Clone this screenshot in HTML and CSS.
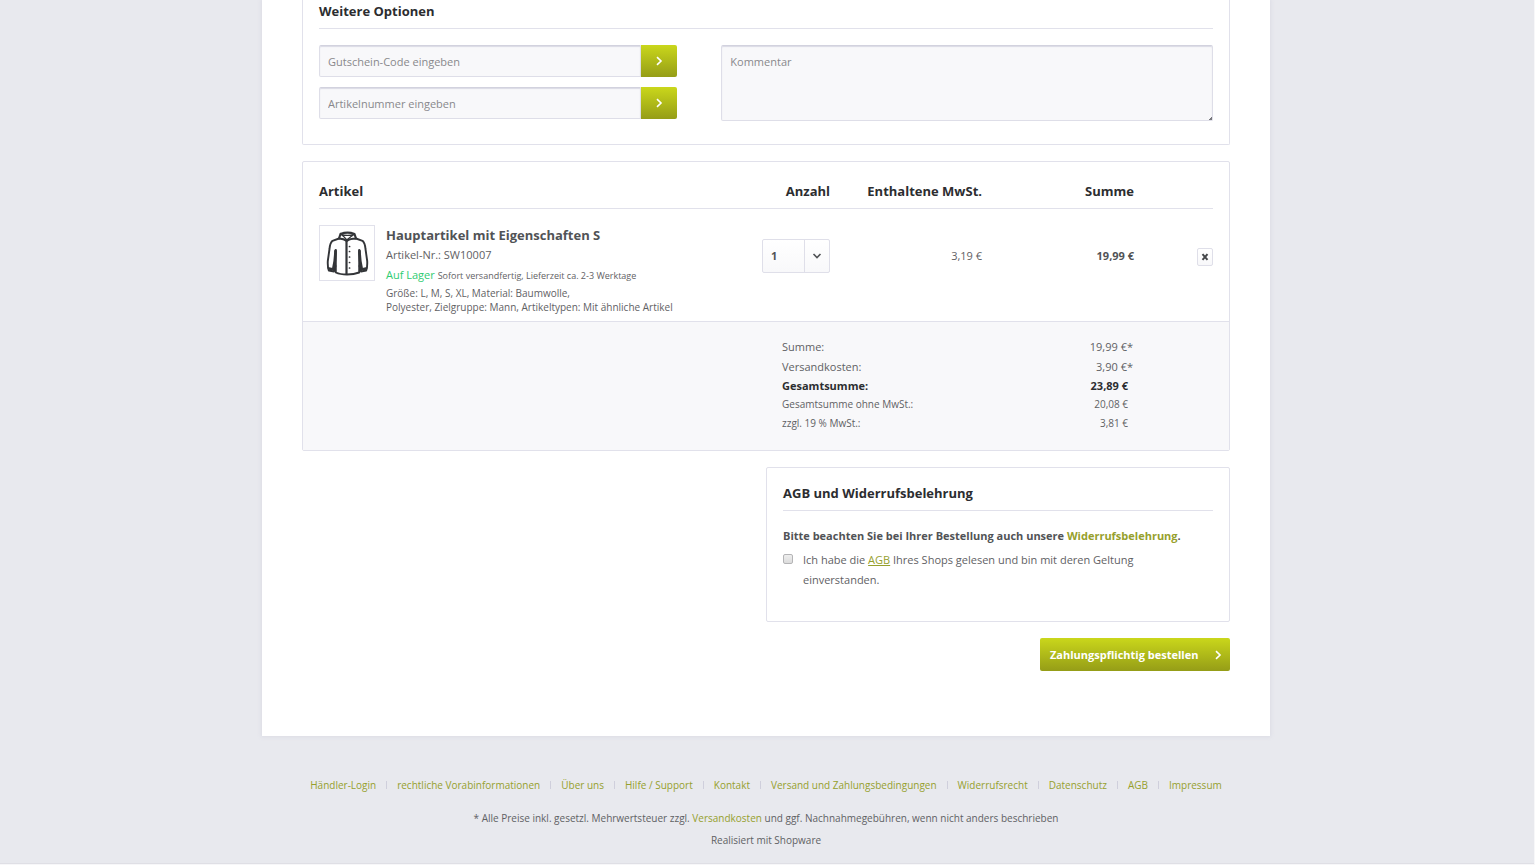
FILE: index.html
```html
<!DOCTYPE html>
<html lang="de">
<head>
<meta charset="utf-8">
<meta name="viewport" content="width=device-width, initial-scale=1">
<title>Bestellung prüfen</title>
<link rel="stylesheet" href="styles.css">
</head>
<body>
<div class="site">
<main class="page">
  <section class="panel panel--options">
    <h2 class="panel-title panel-title--top">Weitere Optionen</h2>
    <div class="options">
      <div class="options-codes">
        <form class="code-form">
          <input class="field" type="text" placeholder="Gutschein-Code eingeben" aria-label="Gutschein-Code">
          <button class="btn code-btn" type="button" aria-label="Gutschein einlösen"><svg class="chevron" viewBox="0 0 10 10"><path d="M3 1.2 7 5 3 8.8"/></svg></button>
        </form>
        <form class="code-form">
          <input class="field" type="text" placeholder="Artikelnummer eingeben" aria-label="Artikelnummer">
          <button class="btn code-btn" type="button" aria-label="Artikel hinzufügen"><svg class="chevron" viewBox="0 0 10 10"><path d="M3 1.2 7 5 3 8.8"/></svg></button>
        </form>
      </div>
      <textarea class="field comment" placeholder="Kommentar" aria-label="Kommentar"></textarea>
    </div>
  </section>

  <section class="panel cart">
    <div class="cart-body">
      <table class="cart-table">
        <colgroup><col><col class="col-qty"><col class="col-price"><col class="col-price"><col class="col-action"></colgroup>
        <thead>
          <tr><th class="left" scope="col">Artikel</th><th scope="col">Anzahl</th><th scope="col">Enthaltene MwSt.</th><th scope="col">Summe</th><td></td></tr>
        </thead>
        <tbody>
          <tr>
            <td class="left">
              <div class="product">
                <a class="thumb" href="#" aria-label="Hauptartikel mit Eigenschaften S">
                  <svg viewBox="0 0 54 54">
                    <g fill="none" stroke="#333538" stroke-linejoin="round" stroke-linecap="round">
                      <path stroke-width="2.2" d="M20.500 8 Q27.500 5.200 34.500 8 L36 12.500 M20.500 8 L19 12.500 M36 12.500 Q30 12.500 26.800 15 Q24 12.800 19 12.500"/>
                      <path stroke-width="1.400" d="M21 8.500 Q24.500 10.500 26.800 14 Q30.500 10.500 34.200 8.500 Q27.500 10.300 21 8.500"/>
                      <path stroke-width="1.900" d="M19 12.500 L12.500 14.800 Q10 17 9.500 23 L7.800 35 Q7.500 41 8.800 44.500 L14 45.500 L15.500 40 M36 12.500 L42.500 14.800 Q45 17 45.500 23 L47.200 35 Q47.500 41 46.200 44.500 L41 45.500 L39.500 40"/>
                      <path stroke-width="1.900" d="M15.800 24 V46.500 Q20 48.500 27 48.500 Q34 48.500 39.200 46.500 V24"/>
                      <path stroke-width="2.200" d="M26.500 15 V48"/>
                      <path stroke-width="2.800" d="M15.500 25 Q15.500 33 13.500 42 M39.500 25 Q39.500 33 41.500 42"/>
                      <path stroke-width="2.400" d="M9 42.500 L13.500 43.500 M46 42.500 L41.500 43.500"/>
                      <path stroke-width="1.700" d="M29.500 20.500h.1M29.500 25.500h.1M29.500 31h.1M29.500 36.500h.1M29.500 42h.1"/>
                    </g>
                  </svg>
                </a>
                <div class="product-text">
                  <a class="product-name" href="#">Hauptartikel mit Eigenschaften S</a>
                  <p class="line">Artikel-Nr.: SW10007</p>
                  <p class="line"><span class="stock">Auf Lager</span> <span class="small">Sofort versandfertig, Lieferzeit ca. 2-3 Werktage</span></p>
                  <p class="attributes">Größe: L, M, S, XL, Material: Baumwolle,<br>Polyester, Zielgruppe: Mann, Artikeltypen: Mit ähnliche Artikel</p>
                </div>
              </div>
            </td>
            <td>
              <div class="quantity">
                <select class="quantity-select" aria-label="Anzahl"><option>1</option><option>2</option><option>3</option></select>
                <span class="quantity-arrow"><svg viewBox="0 0 10 10"><path d="M1.500 3 5 6.500 8.500 3"/></svg></span>
              </div>
            </td>
            <td>3,19 €</td>
            <td class="strong">19,99 €</td>
            <td><button class="remove" type="button" aria-label="Artikel entfernen"><svg viewBox="0 0 8 8"><path d="M1.500 1.200 6.500 6.800M6.500 1.200 1.500 6.800"/></svg></button></td>
          </tr>
        </tbody>
      </table>
    </div>
    <div class="totals">
      <table class="totals-table">
        <tr><th scope="row">Summe:</th><td class="starred">19,99 €*</td></tr>
        <tr><th scope="row">Versandkosten:</th><td class="starred">3,90 €*</td></tr>
        <tr class="grand"><th scope="row">Gesamtsumme:</th><td>23,89 €</td></tr>
        <tr class="minor"><th scope="row">Gesamtsumme ohne MwSt.:</th><td>20,08 €</td></tr>
        <tr class="minor"><th scope="row">zzgl. 19 % MwSt.:</th><td>3,81 €</td></tr>
      </table>
    </div>
  </section>

  <section class="panel terms">
    <h2 class="panel-title">AGB und Widerrufsbelehrung</h2>
    <p class="notice">Bitte beachten Sie bei Ihrer Bestellung auch unsere <a href="#">Widerrufsbelehrung</a>.</p>
    <div class="agree">
      <input class="checkbox" type="checkbox" id="agb">
      <label for="agb">Ich habe die <a class="underlined" href="#">AGB</a> Ihres Shops gelesen und bin mit deren Geltung einverstanden.</label>
    </div>
  </section>

  <div class="actions">
    <button class="btn order" type="button">Zahlungspflichtig bestellen <svg class="chevron" viewBox="0 0 10 10"><path d="M3 1.200 7 5 3 8.800"/></svg></button>
  </div>
</main>

<footer class="footer">
  <nav class="links">
    <a href="#">Händler-Login</a><a href="#">rechtliche Vorabinformationen</a><a href="#">Über uns</a><a href="#">Hilfe / Support</a><a href="#">Kontakt</a><a href="#">Versand und Zahlungsbedingungen</a><a href="#">Widerrufsrecht</a><a href="#">Datenschutz</a><a href="#">AGB</a><a href="#">Impressum</a>
  </nav>
  <p class="vat">* Alle Preise inkl. gesetzl. Mehrwertsteuer zzgl. <a href="#">Versandkosten</a> und ggf. Nachnahmegebühren, wenn nicht anders beschrieben</p>
  <p class="made">Realisiert mit Shopware</p>
</footer>
</div>
</body>
</html>
```

FILE: styles.css
```css
* { box-sizing: border-box; }
body {
  margin: 0;
  background: #f7f7f9;
  color: #5f6164;
  font: 11px/20px "Open Sans", "Noto Sans", sans-serif;
}
h2, p { margin: 0; }
a { color: #96a02d; text-decoration: none; }
input, select, textarea, button { font: inherit; color: inherit; margin: 0; }
svg { display: block; fill: none; stroke: currentColor; }

.site {
  margin-right: 1px;
  padding-right: 2px;
  background: #e8e9ee;
  border-bottom: 1px solid #dfdfe5;
}
.page {
  max-width: 1008px;
  margin: 0 auto;
  padding: 0 40px 65px;
  background: #fff;
  box-shadow: 0 0 4px 1px #dcdce5;
}
.panel {
  border: 1px solid #e1e1eb;
  border-radius: 2px;
  background: #fff;
}
.panel-title {
  padding: 15px 0 7px;
  border-bottom: 1px solid #e1e1eb;
  color: #2c2d30;
  font-size: 13px;
  font-weight: 700;
  line-height: 20px;
}
.panel-title--top { padding: 1px 0 7px; }
.panel--options {
  padding: 0 16px 23px;
  border-top: 0;
  border-radius: 0 0 2px 2px;
}

.options {
  display: grid;
  grid-template-columns: 40% 55%;
  justify-content: space-between;
  padding-top: 16px;
}
.options-codes { display: grid; gap: 10px; align-content: start; }
.code-form { display: flex; height: 32px; }
.field {
  flex: 1;
  min-width: 0;
  padding: 2px 8px 0;
  border: 1px solid #dedee8;
  border-top-color: #d2d2de;
  border-radius: 2px 0 0 2px;
  background: #f8f8fa;
  box-shadow: inset 0 1px 1px #dadae5;
}
.field::placeholder { color: #88888c; opacity: 1; }
.comment {
  height: 76px;
  padding-top: 6px;
  border-radius: 2px;
  resize: vertical;
}
.comment::-webkit-resizer {
  background: linear-gradient(135deg, transparent 50%, #77777c 50%) right bottom / 3px 3px no-repeat;
}
.btn {
  border: 0;
  border-radius: 2px;
  background: linear-gradient(#cad71b, #959d17);
  color: #fff;
}
.code-btn {
  display: grid;
  place-items: center;
  width: 36px;
  border-radius: 0 2px 2px 0;
}
.chevron { width: 10px; height: 10px; stroke-width: 1.6; }

.cart { margin-top: 16px; }
.cart-body { padding: 0 16px 7px; }
.cart-table { width: 100%; table-layout: fixed; border-collapse: collapse; }
.cart-table th, .cart-table td { padding: 0; text-align: right; }
.cart-table th.left, .cart-table td.left { text-align: left; }
.cart-table thead th, .cart-table thead td {
  padding: 19px 0 7px;
  border-bottom: 1px solid #e1e1eb;
  color: #2c2d30;
  font-size: 13px;
}
.cart-table tbody td { padding-bottom: 12px; }
.cart-table tbody td.left { padding-bottom: 0; }
.col-qty { width: 68px; }
.col-price { width: 152px; }
.col-action { width: 79px; }
.product { display: flex; gap: 11px; padding-top: 16px; white-space: nowrap; }
.thumb {
  width: 56px;
  height: 56px;
  border: 1px solid #e1e1eb;
}
.product-name { display: block; color: #515356; font-size: 13px; font-weight: 700; }
.stock { color: #2ecc71; }
.small { font-size: 9px; }
.attributes { font-size: 10px; line-height: 14px; }
.cart-table .strong { color: #515356; font-weight: 700; }

.quantity {
  position: relative;
  height: 34px;
  color: #515356;
}
.quantity-select {
  width: 100%;
  height: 100%;
  padding: 0 30px 0 8px;
  border: 1px solid #dfdfe9;
  border-radius: 2px;
  background: linear-gradient(#fff, #f8f8fa);
  font-weight: 700;
  appearance: none;
}
.quantity-arrow {
  position: absolute;
  top: 1px;
  right: 1px;
  bottom: 1px;
  display: grid;
  place-items: center;
  width: 25px;
  border-left: 1px solid #dfdfe9;
  pointer-events: none;
}
.quantity-arrow svg { width: 10px; height: 10px; stroke-width: 1.6; }
.remove {
  display: inline-grid;
  place-items: center;
  width: 16px;
  height: 18px;
  padding: 0;
  border: 1px solid #dfdfe9;
  border-radius: 2px;
  background: linear-gradient(#fff, #f8f8fa);
  color: #45474a;
  vertical-align: middle;
}
.remove svg { width: 8px; height: 8px; stroke-width: 2; }

.totals {
  padding: 15px 96px 17px 0;
  border-top: 1px solid #e1e1eb;
  background: #f8f8fa;
}
.totals-table { width: 351px; margin-left: auto; border-collapse: collapse; line-height: 20px; }
.totals-table th { padding: 0; text-align: left; font-weight: 400; }
.totals-table td { padding: 0 5px 0 0; text-align: right; }
.totals-table .starred { padding-right: 0; }
.totals-table .grand > * { color: #2c2d30; font-weight: 700; line-height: 18px; }
.totals-table .minor > * { font-size: 10px; line-height: 19px; }

.terms {
  width: 50%;
  margin: 16px 0 0 auto;
  padding: 0 16px 31px;
}
.notice { padding-top: 15px; color: #515356; font-weight: 700; }
.agree { display: flex; gap: 10px; padding: 4px 40px 0 0; }
.checkbox {
  flex: none;
  width: 10px;
  height: 10px;
  margin-top: 4px;
  border: 1px solid #b4b4b6;
  border-radius: 2px;
  background: linear-gradient(#eee, #dcdcdc);
  appearance: none;
}
.checkbox:checked { background: #96a02d; }
.underlined { text-decoration: underline; }
.actions { display: flex; justify-content: flex-end; padding-top: 16px; }
.order {
  display: flex;
  align-items: center;
  justify-content: space-between;
  width: 190px;
  height: 33px;
  padding: 0 7px 0 10px;
  font-weight: 700;
}

.footer { padding: 39px 0 13px; text-align: center; }
.links { display: flex; flex-wrap: wrap; justify-content: center; font-size: 10px; }
.links a { display: flex; align-items: center; }
.links a + a::before {
  content: "";
  width: 1px;
  height: 8px;
  margin: 0 10px;
  background: #cfcfdc;
}
.vat { padding-top: 13px; font-size: 10px; }
.made { padding-top: 2px; font-size: 10px; }
```
